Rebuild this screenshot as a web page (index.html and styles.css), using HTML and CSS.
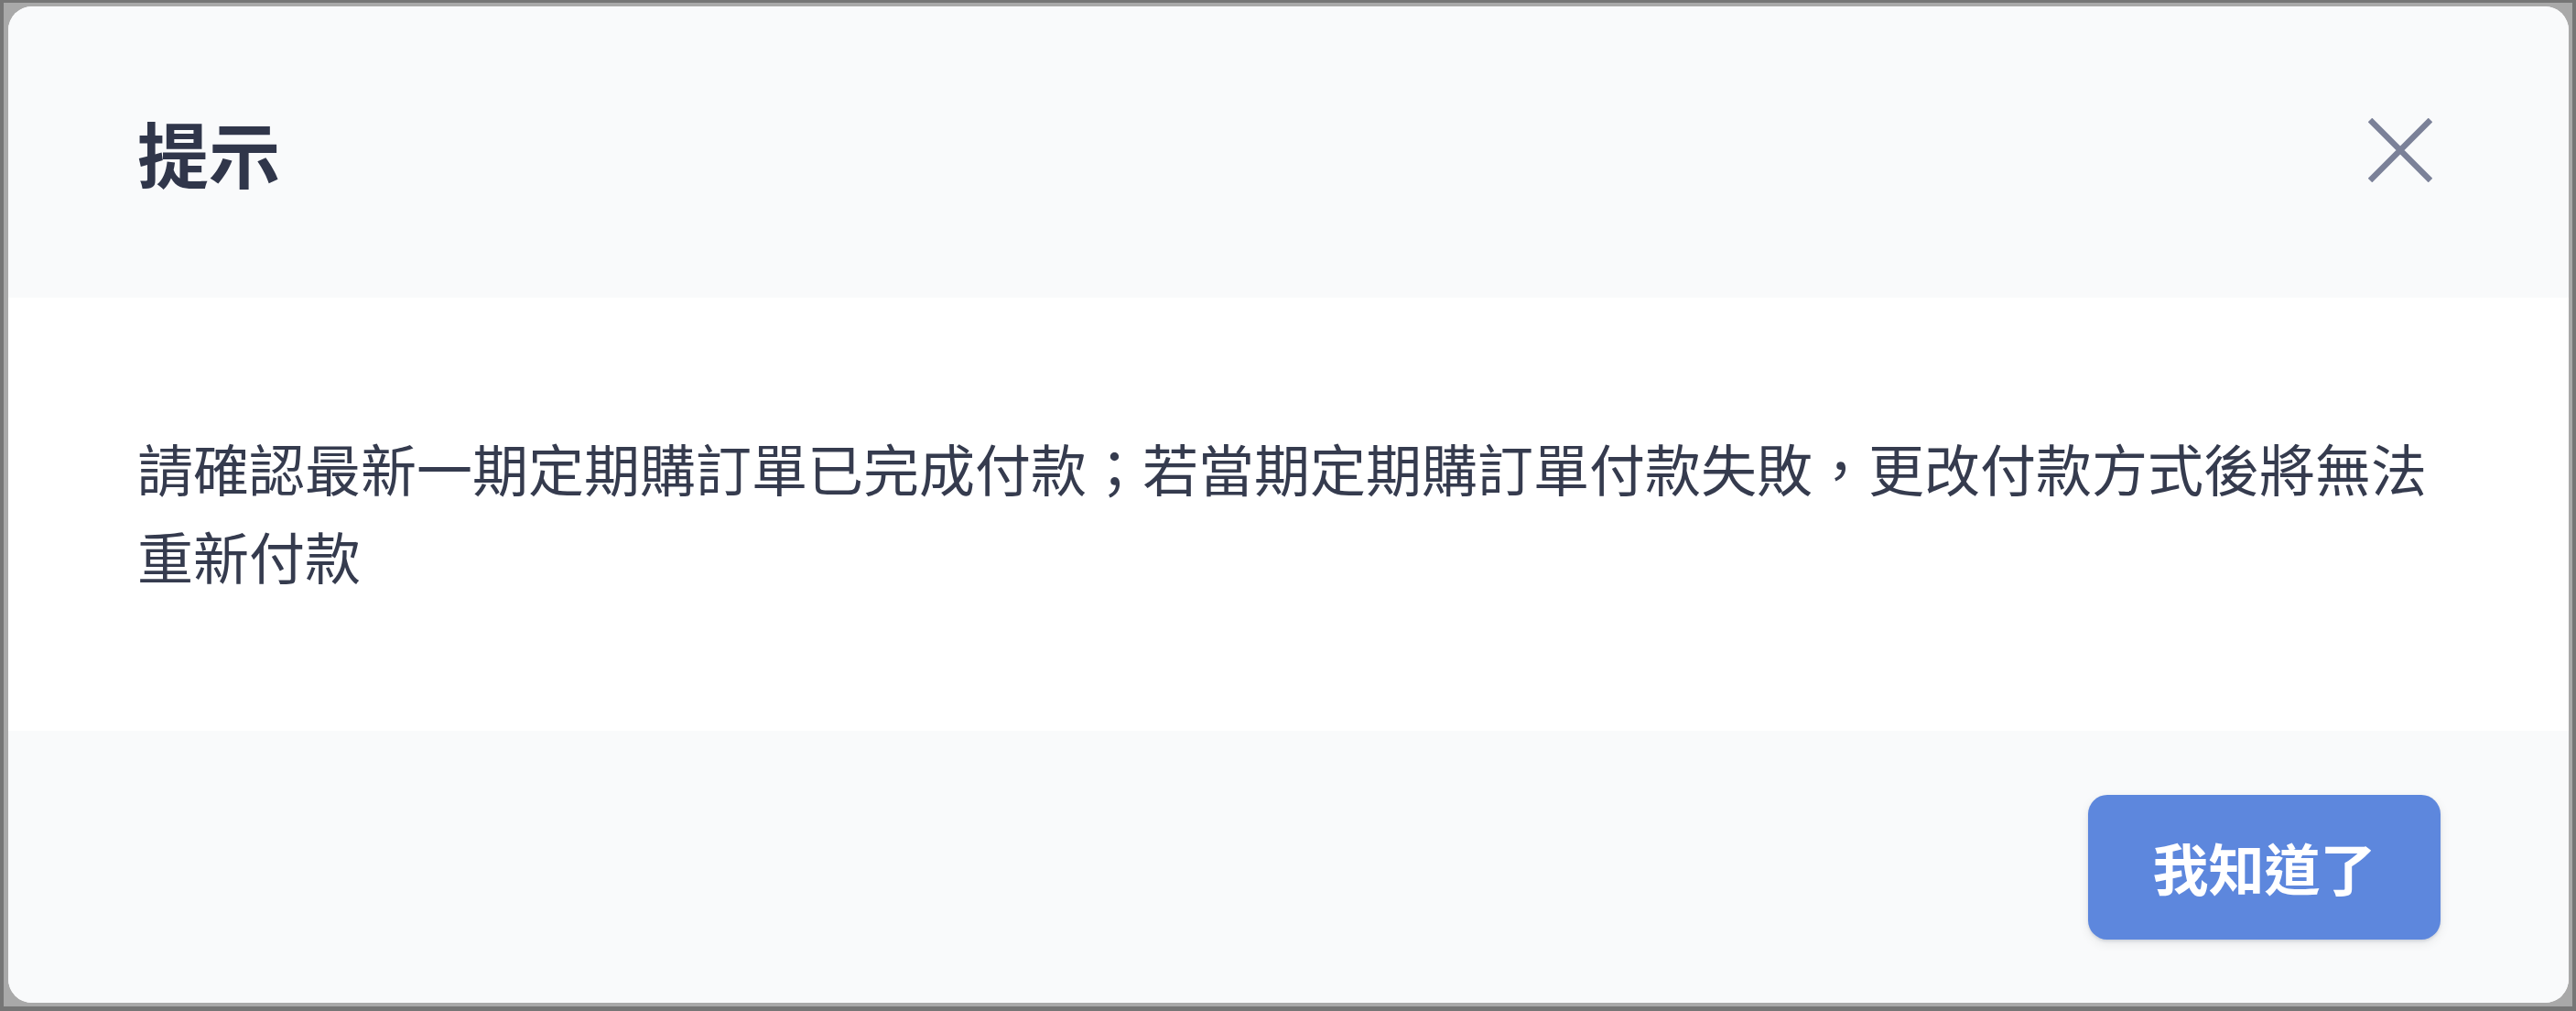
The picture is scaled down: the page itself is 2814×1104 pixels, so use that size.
FILE: index.html
```html
<!DOCTYPE html>
<html lang="zh-Hant">
<head>
<meta charset="utf-8">
<title>提示</title>
<link rel="stylesheet" href="styles.css">
</head>
<body>
<div class="frame">
  <div class="backdrop">
    <div class="dialog" role="dialog" aria-labelledby="dlg-title">
      <div class="dialog-header">
        <h2 class="dialog-title" id="dlg-title">提示</h2>
        <button class="close-btn" type="button" aria-label="關閉">
          <svg class="close-icon" viewBox="0 0 70 70" width="70" height="70" aria-hidden="true">
            <path d="M2 2 L68 68 M68 2 L2 68" />
          </svg>
        </button>
      </div>
      <div class="dialog-body">
        <p class="dialog-text">請確認最新一期定期購訂單已完成付款；若當期定期購訂單付款失敗，更改付款方式後將無法重新付款</p>
      </div>
      <div class="dialog-footer">
        <button class="confirm-btn" type="button">我知道了</button>
      </div>
    </div>
  </div>
</div>
</body>
</html>
```

FILE: styles.css
```css
* {
  box-sizing: border-box;
}

html, body {
  margin: 0;
  padding: 0;
}

body {
  width: 2814px;
  height: 1104px;
  overflow: hidden;
  font-family: "Noto Sans CJK TC", "Noto Sans", sans-serif;
  background: #767676;
}

.frame {
  width: 2814px;
  height: 1104px;
  padding: 3px 4px 5px 4px;
  background: #767676;
}

.backdrop {
  height: 100%;
  padding: 4px 4px 4px 5px;
  background: #a9a9a9;
}

.dialog {
  height: 100%;
  display: flex;
  flex-direction: column;
  background: #ffffff;
  border-radius: 26px;
  overflow: hidden;
}

.dialog-header {
  height: 318px;
  flex: none;
  display: flex;
  align-items: center;
  justify-content: space-between;
  padding: 0 149px 0 141px;
  background: #f9fafb;
}

.dialog-title {
  margin: 0;
  font-size: 78px;
  font-weight: 700;
  line-height: 1;
  color: #30364a;
}

.close-btn {
  display: flex;
  padding: 0;
  border: 0;
  background: transparent;
  margin-top: -4px;
}

.close-icon {
  display: block;
  width: 70px;
  height: 70px;
}

.close-icon path {
  fill: none;
  stroke: #7b8198;
  stroke-width: 6.5;
  stroke-linecap: butt;
}

.dialog-body {
  height: 473px;
  flex: none;
  padding: 138px 144px 0 141px;
  background: #ffffff;
}

.dialog-text {
  margin: 0;
  font-size: 61px;
  line-height: 96px;
  font-weight: 400;
  color: #353b4e;
}

.dialog-footer {
  flex: 1;
  display: flex;
  align-items: center;
  justify-content: flex-end;
  padding: 0 140px 0 140px;
  background: #f9fafb;
}

.confirm-btn {
  width: 385px;
  height: 158px;
  border: 0;
  border-radius: 21px;
  background: #5d87dd;
  color: #ffffff;
  font-family: "Noto Sans CJK TC", "Noto Sans", sans-serif;
  font-size: 61px;
  font-weight: 700;
  box-shadow: 0 4px 12px rgba(0, 0, 0, 0.08), 0 2px 3px rgba(60, 80, 130, 0.15);
}
```
